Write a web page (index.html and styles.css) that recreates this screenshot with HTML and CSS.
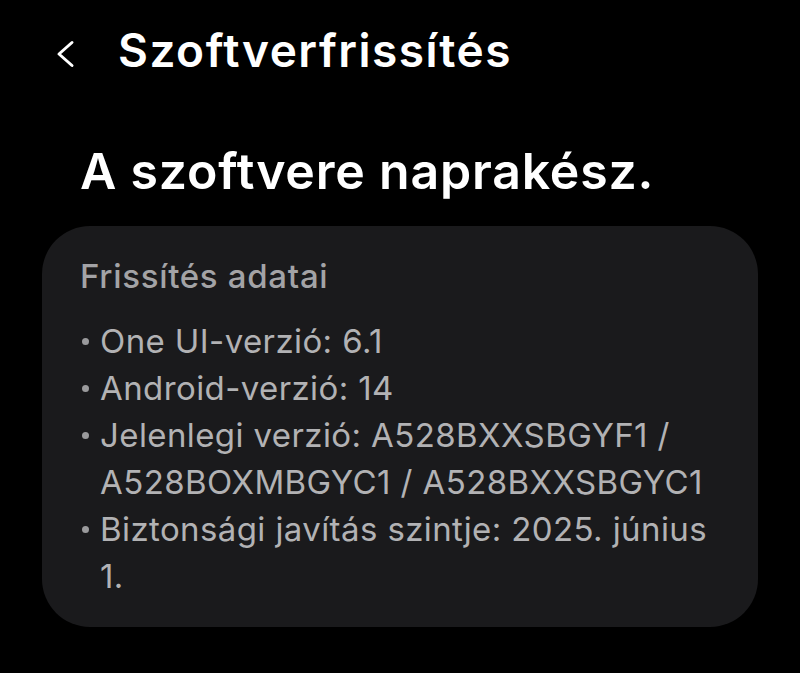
FILE: index.html
```html
<!DOCTYPE html>
<html lang="hu">
<head>
  <meta charset="UTF-8" />
  <meta name="viewport" content="width=device-width, initial-scale=1.0"/>
  <title>Szoftverfrissítés</title>
  <link rel="stylesheet" href="styles.css">
</head>
<body>
  <header class="top-bar">
    <button class="back-btn" aria-label="Vissza">
      <svg width="20" height="28" viewBox="0 0 20 28">
        <path d="M17 2.5 L4 14 L17 25.5" fill="none" stroke="#fff" stroke-width="3" stroke-linecap="round" stroke-linejoin="round"/>
      </svg>
    </button>
    <h1>Szoftverfrissítés</h1>
  </header>

  <main>
    <h2 class="status">A szoftvere naprakész.</h2>

    <section class="card">
      <h3>Frissítés adatai</h3>
      <ul class="details">
        <li>One UI-verzió: 6.1</li>
        <li>Android-verzió: 14</li>
        <li>Jelenlegi verzió: A528BXXSBGYF1 / A528BOXMBGYC1 / A528BXXSBGYC1</li>
        <li>Biztonsági javítás szintje: 2025. június 1.</li>
      </ul>
    </section>
  </main>
</body>
</html>
```

FILE: styles.css
```css
* { box-sizing: border-box; }

body {
  margin: 0;
  background-color: #000;
  color: #fff;
  font-family: Inter, Roboto, sans-serif;
}

.top-bar {
  display: flex;
  align-items: center;
  height: 100px;
  padding-left: 55px;
}

.back-btn {
  background: none;
  border: none;
  padding: 0;
  margin: 8px 43px 0 0;
  display: flex;
}

.top-bar h1 {
  margin: 0;
  font-size: 46px;
  font-weight: 600;
  letter-spacing: 1.5px;
}

main {
  padding: 0 42px;
}

.status {
  margin: 41px 0 25px 38px;
  font-size: 50px;
  font-weight: 600;
  letter-spacing: 0.8px;
}

.card {
  background-color: #1a1a1c;
  border-radius: 48px;
  padding: 30px 30px 27px 38px;
}

.card h3 {
  margin: 0 0 22px;
  font-size: 33px;
  font-weight: 500;
  letter-spacing: 0.7px;
  color: #a3a3a6;
}

.details {
  list-style: none;
  margin: 0;
  padding: 0;
  color: #b2b2b4;
  font-size: 33px;
  line-height: 47px;
  letter-spacing: 0.4px;
}

.details li {
  position: relative;
  padding-left: 20px;
}

.details li::before {
  content: "";
  position: absolute;
  left: 2px;
  top: 20px;
  width: 7px;
  height: 7px;
  border-radius: 50%;
  background-color: #9a9a9c;
}
```
